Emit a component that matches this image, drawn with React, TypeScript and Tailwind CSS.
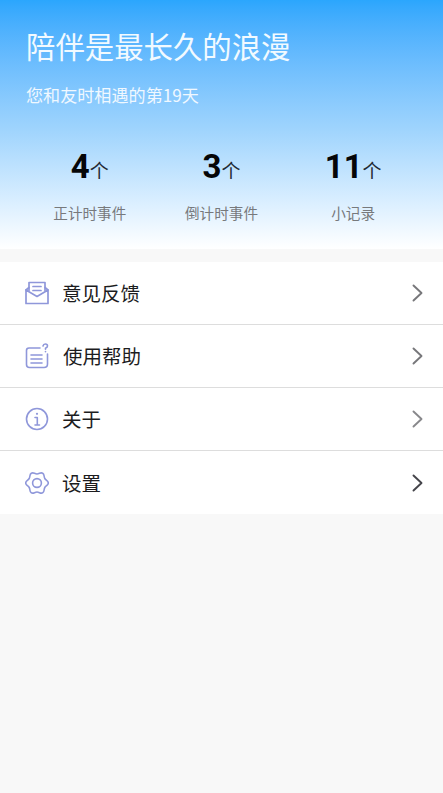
import React from 'react';

const cjk = 'font-["Noto_Sans_CJK_SC","Noto_Sans",sans-serif]';

const stats = [
  { num: '4', label: '正计时事件' },
  { num: '3', label: '倒计时事件' },
  { num: '11', label: '小记录' },
];

// six soft lobes round the middle of the gear, tangents perpendicular to the radius
const gearPath = (() => {
  const at = (deg: number, r: number, h: number) => {
    const a = (deg * Math.PI) / 180;
    return [12 + r * Math.cos(a) - h * Math.sin(a), 11 + r * Math.sin(a) + h * Math.cos(a)].map((n) => n.toFixed(2)).join(' ');
  };
  let d = `M${at(0, 11.3, 0)}`;
  for (let i = 0; i < 12; i++) {
    const a = i * 30;
    const b = a + 30;
    const r1 = i % 2 === 0 ? 11.3 : 9;
    const r2 = i % 2 === 0 ? 9 : 11.3;
    d += ` C${at(a, r1, 2.4)} ${at(b, r2, -2.4)} ${at(b, r2, 0)}`;
  }
  return d + ' Z';
})();

const MailIcon = () => (
  <svg width="24" height="24" viewBox="0 0 24 24" fill="none" stroke="#8f97da" strokeWidth="1.7" strokeLinejoin="round" strokeLinecap="round">
    <path d="M4 9.5 V1.5 H20 V9.5" />
    <path d="M1 9 L4 6.5 M23 9 L20 6.5" />
    <path d="M1 9 V22.5 H23 V9 L12 15.5 Z" />
    <path d="M8 5.5 H16 M8 9.5 H16" />
  </svg>
);

const HelpIcon = () => (
  <svg width="24" height="26" viewBox="0 0 24 26" fill="none" stroke="#8f97da" strokeWidth="1.6" strokeLinecap="round" strokeLinejoin="round">
    <path d="M15 5 H4 Q1.5 5 1.5 7.5 V21.5 Q1.5 24.5 4.5 24.5 H19 Q22.5 24.5 22.5 21 V11" />
    <path d="M6 12 H17 M6 16 H17 M6 20 H17" />
    <path d="M18 3 Q18.5 1 20.3 1 Q22.5 1 22.5 3 Q22.5 4.3 20.5 5.3 V6.3" />
    <path d="M20.5 8.6 V8.7" />
  </svg>
);

const InfoIcon = () => (
  <svg width="24" height="24" viewBox="0 0 24 24" fill="none" stroke="#8f97da" strokeWidth="1.6" strokeLinecap="round" strokeLinejoin="round">
    <circle cx="12" cy="12" r="10.5" />
    <path d="M10 10.5 H12.3 V18 M10 18 H14.5" />
    <circle cx="12" cy="6.8" r="1.1" fill="#8f97da" stroke="none" />
  </svg>
);

const GearIcon = () => (
  <svg width="24" height="22" viewBox="0 0 24 22" fill="none" stroke="#8f97da" strokeWidth="1.6" strokeLinecap="round" strokeLinejoin="round">
    <path d={gearPath} />
    <circle cx="12" cy="11" r="4.4" />
  </svg>
);

const Chevron = ({ color }: { color: string }) => (
  <svg width="11" height="18" viewBox="0 0 11 18" fill="none" stroke={color} strokeWidth="1.9" strokeLinecap="round" strokeLinejoin="round">
    <path d="M1.5 1.5 L9.5 9 L1.5 16.5" />
  </svg>
);

const rows = [
  { icon: <MailIcon />, label: '意见反馈', gap: 'gap-[13px]', chevron: '#77777a' },
  { icon: <HelpIcon />, label: '使用帮助', gap: 'gap-[14px]', chevron: '#77777a' },
  { icon: <InfoIcon />, label: '关于', gap: 'gap-[13px]', chevron: '#88888b' },
  { icon: <GearIcon />, label: '设置', gap: 'gap-[13px]', chevron: '#44444a' },
];

export default function App() {
  return (
    <div className={`min-h-[793px] bg-[#f8f8f8] ${cjk}`}>
      {/* Header */}
      <div className="h-[249px] bg-gradient-to-b from-[#2ba6fd] via-[#9fd4fd] via-[52%] to-white px-[26px] pt-[24px]">
        <h1 className="text-[29.4px] leading-[42px] font-normal text-[#f2faff]">陪伴是最长久的浪漫</h1>
        <p className="mt-[17px] text-[17.1px] leading-[24px] text-[#f0f8ff]">您和友时相遇的第19天</p>
        <div className="mt-[38px] -mx-[2px] grid grid-cols-3">
          {stats.map((s) => (
            <div key={s.label} className="flex flex-col items-center">
              <div className="flex items-baseline">
                <span className='text-[33px] leading-[44px] font-bold text-[#050608] font-["Roboto",sans-serif]'>{s.num}</span>
                <span className="text-[19px] leading-[28px] text-[#1f2933]">个</span>
              </div>
              <span className="mt-[14px] text-[14.6px] leading-[20px] text-[#77797c]">{s.label}</span>
            </div>
          ))}
        </div>
      </div>

      {/* Menu */}
      <div className="mt-[13px] bg-white">
        {rows.map((r, i) => (
          <div
            key={r.label}
            className={`flex h-[63px] items-center justify-between pl-[25px] pr-[20px] ${i < rows.length - 1 ? 'border-b border-[#dddddd]' : ''}`}
          >
            <div className={`flex items-center ${r.gap}`}>
              <div className="flex w-[24px] justify-center">{r.icon}</div>
              <span className="text-[19.5px] leading-[28px] text-[#1c1c1e]">{r.label}</span>
            </div>
            <Chevron color={r.chevron} />
          </div>
        ))}
      </div>
    </div>
  );
}
